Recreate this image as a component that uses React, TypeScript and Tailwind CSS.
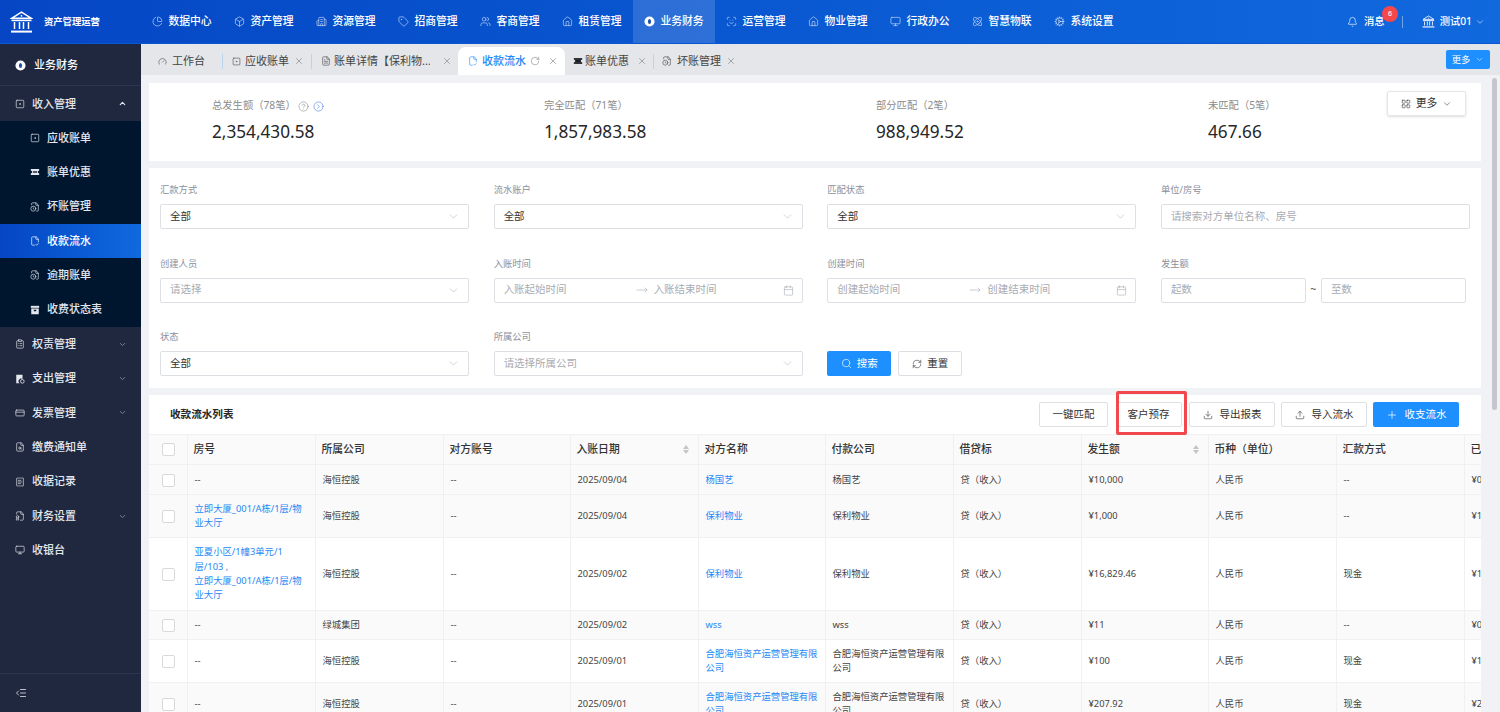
import React from "react";
import {
  Bell, Box, Building2, Calendar, ChartPie, ChevronDown, ChevronUp, CircleHelp, CircleChevronRight, ClipboardList,
  Cog, Download, FileCheck2, FileClock, FileSearch, Gauge, House, LayoutGrid, Monitor, MoveRight, Plus,
  ReceiptText, RefreshCw, RotateCw, Search, SquareDot, Tag, Upload, Atom, X, ScanFace, IndentDecrease, FileBadge,
  CreditCard, FileText, Users,
} from "lucide-react";

function CoinIcon({ className }: { className: string }) {
  return (
    <svg viewBox="0 0 12 12" className={className}>
      <circle cx="6" cy="6" r="5.5" fill="#fff" />
      <ellipse cx="6" cy="6" rx="1.7" ry="2.8" fill="#1b4fa8" />
    </svg>
  );
}

function BankIcon({ className }: { className: string }) {
  return (
    <svg viewBox="0 0 23 22" className={className} fill="none" stroke="currentColor">
      <path d="M2 7.2 11.5 1.2 21 7.2Z" strokeWidth="1.5" />
      <circle cx="11.5" cy="4.8" r="0.9" fill="currentColor" stroke="none" />
      <path d="M1.5 9.4H21.5" strokeWidth="1.6" />
      <path d="M4.5 11V18M9.5 11V18M13.5 11V18M18.5 11V18" strokeWidth="1.5" />
      <path d="M1 20.6H22" strokeWidth="2" />
    </svg>
  );
}

function TicketSolid({ className }: { className: string }) {
  return (
    <svg viewBox="0 0 12 12" className={className} fill="currentColor">
      <path d="M1 2.5H11V4.4A1.6 1.6 0 0 0 11 7.6V9.5H1V7.6A1.6 1.6 0 0 0 1 4.4Z" />
      <path d="M3.5 5.2H8.5V6.8H3.5Z" fill="#00162e" />
    </svg>
  );
}

function ArchiveSolid({ className }: { className: string }) {
  return (
    <svg viewBox="0 0 12 12" className={className} fill="currentColor">
      <path d="M1 1H11V3.4H1Z" />
      <path d="M1.5 4.2H10.5V11H1.5ZM4.5 5.8V7.4H7.5V5.8Z" fillRule="evenodd" />
    </svg>
  );
}

function DocSolid({ className }: { className: string }) {
  return (
    <svg viewBox="0 0 12 12" className={className} fill="currentColor">
      <path d="M1.5 1H9V6A3 3 0 0 0 5.6 11H1.5Z" />
      <circle cx="8.8" cy="8.8" r="2.2" fill="none" stroke="currentColor" strokeWidth="1" />
    </svg>
  );
}

const navItems = [
  { label: "数据中心", Icon: ChartPie },
  { label: "资产管理", Icon: Box },
  { label: "资源管理", Icon: Building2 },
  { label: "招商管理", Icon: Tag },
  { label: "客商管理", Icon: Users },
  { label: "租赁管理", Icon: House },
  { label: "业务财务", Icon: null, active: true },
  { label: "运营管理", Icon: ScanFace },
  { label: "物业管理", Icon: House },
  { label: "行政办公", Icon: Monitor },
  { label: "智慧物联", Icon: Atom },
  { label: "系统设置", Icon: Cog },
];

const sideTop = [
  { label: "权责管理", Icon: ClipboardList, arrow: true },
  { label: "支出管理", Icon: DocSolid, arrow: true },
  { label: "发票管理", Icon: CreditCard, arrow: true },
  { label: "缴费通知单", Icon: FileSearch },
  { label: "收据记录", Icon: ReceiptText },
  { label: "财务设置", Icon: FileBadge, arrow: true },
  { label: "收银台", Icon: Monitor },
];

const sideSub = [
  { label: "应收账单", Icon: SquareDot },
  { label: "账单优惠", Icon: TicketSolid },
  { label: "坏账管理", Icon: FileClock },
  { label: "收款流水", Icon: FileCheck2, active: true },
  { label: "逾期账单", Icon: FileClock },
  { label: "收费状态表", Icon: ArchiveSolid },
];

const stats = [
  { label: "总发生额（78笔）", value: "2,354,430.58", help: true },
  { label: "完全匹配（71笔）", value: "1,857,983.58" },
  { label: "部分匹配（2笔）", value: "988,949.52" },
  { label: "未匹配（5笔）", value: "467.66" },
];

const rows = [
  { h: "h-[30px] [&_td]:pt-[1px]", bg: "bg-[#fafafa]", room: ["--"], company: "海恒控股", date: "2025/09/04", name: "杨国艺", amount: "¥10,000", method: "--", done: "¥0" },
  { h: "h-[43px]", bg: "bg-[#fafafa]", room: ["立即大厦_001/A栋/1层/物业大厅"], company: "海恒控股", date: "2025/09/04", name: "保利物业", amount: "¥1,000", method: "--", done: "¥1,000" },
  { h: "h-[73px]", bg: "bg-white", room: ["亚夏小区/1幢3单元/1层/103 ,", "立即大厦_001/A栋/1层/物业大厅"], company: "海恒控股", date: "2025/09/02", name: "保利物业", amount: "¥16,829.46", method: "现金", done: "¥16,829" },
  { h: "h-[29px] [&_td]:pt-[1px]", bg: "bg-[#fafafa]", room: ["--"], company: "绿城集团", date: "2025/09/02", name: "wss", amount: "¥11", method: "--", done: "¥0" },
  { h: "h-[43px]", bg: "bg-white", room: ["--"], company: "海恒控股", date: "2025/09/01", name: "合肥海恒资产运营管理有限公司", amount: "¥100", method: "现金", done: "¥100" },
  { h: "h-[43px]", bg: "bg-[#fafafa]", room: ["--"], company: "海恒控股", date: "2025/09/01", name: "合肥海恒资产运营管理有限公司", amount: "¥207.92", method: "现金", done: "¥207.92" },
];

const headers = ["房号", "所属公司", "对方账号", "入账日期", "对方名称", "付款公司", "借贷标", "发生额", "币种（单位）", "汇款方式", "已匹配金额"];

function Sorter() {
  return (
    <span className="flex flex-col gap-[1px]">
      <span className="w-0 h-0 border-x-[3px] border-x-transparent border-b-[4px] border-b-[#c4c4c4]" />
      <span className="w-0 h-0 border-x-[3px] border-x-transparent border-t-[4px] border-t-[#c4c4c4]" />
    </span>
  );
}

function Field({ label, children }: { label: string; children: React.ReactNode }) {
  return (
    <div>
      <div className="h-[15px] leading-[15px] text-[9.3px] text-[#8a8f9c]">{label}</div>
      <div className="mt-[7px]">{children}</div>
    </div>
  );
}

function SelectBox({ value, placeholder }: { value?: string; placeholder?: string }) {
  return (
    <div className="h-[25px] border border-[#dcdfe4] rounded-[2px] flex items-center justify-between pl-[9px] pr-[8px] bg-white">
      <span className={value ? "text-[10.5px] text-[#333]" : "text-[10.5px] text-[#a8abb2]"}>{value || placeholder}</span>
      <ChevronDown className="w-[13px] h-[13px] text-[#b8bbc2]" strokeWidth={1.2} />
    </div>
  );
}

function RangeBox({ from, to }: { from: string; to: string }) {
  return (
    <div className="h-[25px] border border-[#dcdfe4] rounded-[2px] flex items-center pl-[9px] pr-[8px] bg-white text-[10.5px] text-[#a8abb2]">
      <span className="w-[132px]">{from}</span>
      <MoveRight className="w-[12px] h-[12px] text-[#a8abb2] mr-[6px]" strokeWidth={1.2} />
      <span className="flex-1">{to}</span>
      <Calendar className="w-[11px] h-[11px] text-[#a8abb2]" strokeWidth={1.3} />
    </div>
  );
}

function ToolButton({ className, children }: { className: string; children: React.ReactNode }) {
  return (
    <button className={`h-[25px] rounded-[2px] flex items-center justify-center text-[10.5px] ${className}`}>{children}</button>
  );
}

export default function App() {
  return (
    <div className="w-[1500px] h-[712px] overflow-hidden flex flex-col bg-[#f0f2f6] font-['Noto_Sans','Noto_Sans_CJK_SC',sans-serif] text-[#333]">
      {/* top bar */}
      <header className="h-[44px] shrink-0 flex items-stretch text-white bg-gradient-to-r from-[#0646c4] to-[#1169de] border-b border-[#0a57cf]">
        <div className="w-[141px] shrink-0 flex items-center pl-[10px]">
          <BankIcon className="w-[23px] h-[22px]" />
          <span className="ml-[11px] text-[9.3px] font-bold">资产管理运营</span>
        </div>
        {navItems.map(({ label, Icon, active }) => (
          <div key={label} className={active ? "w-[82px] flex items-center justify-center gap-[5px] bg-white/15" : "w-[82px] flex items-center justify-center gap-[5px]"}>
            {Icon ? <Icon className="w-[11px] h-[11px] text-[#dbe7fb]" strokeWidth={1.3} /> : <CoinIcon className="w-[11px] h-[11px]" />}
            <span className="text-[10.8px] font-medium">{label}</span>
          </div>
        ))}
        <div className="flex-1 flex items-center justify-end pr-[15px]">
          <Bell className="w-[11px] h-[12px]" strokeWidth={1.4} />
          <span className="relative ml-[6px] text-[10.3px] font-medium">
            消息
            <span className="absolute left-[18px] -top-[8px] w-[16px] h-[16px] rounded-full bg-[#f5484a] text-[7px] flex items-center justify-center">6</span>
          </span>
          <span className="ml-[17px] w-px h-[12px] bg-white/40" />
          <BankIcon className="ml-[19px] w-[13px] h-[13px]" />
          <span className="ml-[5px] text-[10.3px] font-medium">测试01</span>
          <ChevronDown className="ml-[3px] w-[10px] h-[10px]" strokeWidth={1.3} />
        </div>
      </header>

      <div className="flex-1 flex min-h-0">
        {/* sidebar */}
        <aside className="w-[141px] shrink-0 bg-[#20283f] text-[#e4e7ee] flex flex-col text-[11px] font-medium">
          <div className="h-[42px] shrink-0 flex items-center pl-[15px] pt-[2px] gap-[8px] border-b border-[#2c3450] text-white">
            <CoinIcon className="w-[11px] h-[11px]" />
            <span>业务财务</span>
          </div>
          <div className="h-[34.6px] shrink-0 flex items-center pl-[15px] pr-[14px] pt-[1px] gap-[7px]">
            <SquareDot className="w-[10px] h-[10px]" strokeWidth={1.6} />
            <span className="flex-1">收入管理</span>
            <ChevronUp className="w-[9px] h-[9px]" strokeWidth={3} />
          </div>
          <div className="bg-[#00162e] shrink-0">
            {sideSub.map(({ label, Icon, active }) => (
              <div key={label} className={active ? "h-[34.4px] flex items-center pl-[30px] gap-[7px] text-white bg-gradient-to-r from-[#0646c4] to-[#1169de]" : "h-[34.4px] flex items-center pl-[30px] gap-[7px]"}>
                <Icon className="w-[10px] h-[10px]" strokeWidth={1.6} />
                <span>{label}</span>
              </div>
            ))}
          </div>
          {sideTop.map(({ label, Icon, arrow }) => (
            <div key={label} className="h-[34.4px] shrink-0 flex items-center pl-[15px] pr-[14px] gap-[7px]">
              <Icon className="w-[10px] h-[10px]" strokeWidth={1.6} />
              <span className="flex-1">{label}</span>
              {arrow && <ChevronDown className="w-[9px] h-[9px] text-[#7d8496]" strokeWidth={2.5} />}
            </div>
          ))}
          <div className="mt-auto h-[39px] flex items-center pl-[15px] border-t border-[#2c3450]">
            <IndentDecrease className="w-[12px] h-[12px]" strokeWidth={1.6} />
          </div>
        </aside>

        <main className="relative flex-1 min-w-0 flex flex-col">
          {/* tabs */}
          <div className="h-[31px] shrink-0 bg-[#e4e6ea] flex items-end text-[11px] text-[#444] pl-[9px] whitespace-nowrap">
            <div className="w-[72px] h-[28px] shrink-0 flex items-center pl-[8px] gap-[5px]">
              <Gauge className="w-[9px] h-[9px]" strokeWidth={1.5} />
              <span>工作台</span>
            </div>
            <div className="w-[89px] h-[28px] shrink-0 flex items-center pl-[10px] gap-[4px]">
              <span className="w-px h-[15px] bg-[#bcd3ee] -ml-[10px] mr-[5px]" />
              <SquareDot className="w-[9px] h-[9px]" strokeWidth={1.5} />
              <span>应收账单</span>
              <X className="ml-[1px] w-[10px] h-[10px] text-[#777]" strokeWidth={1.4} />
            </div>
            <div className="w-[147px] h-[28px] shrink-0 flex items-center pl-[10px] gap-[3px]">
              <span className="w-px h-[15px] bg-[#bcd3ee] -ml-[10px] mr-[6px]" />
              <FileText className="w-[10px] h-[10px]" strokeWidth={1.4} />
              <span className="w-[96px] overflow-hidden">账单详情【保利物...</span>
              <X className="ml-[9px] w-[10px] h-[10px] text-[#777]" strokeWidth={1.4} />
            </div>
            <div className="w-[107px] h-[28px] shrink-0 flex items-center pl-[10px] gap-[4px] bg-white rounded-t-[8px] text-[#1e88f5] font-medium">
              <FileCheck2 className="w-[10px] h-[10px]" strokeWidth={1.4} />
              <span>收款流水</span>
              <RotateCw className="w-[10px] h-[10px] text-[#777]" strokeWidth={1.3} />
              <X className="ml-[4px] w-[10px] h-[10px] text-[#777]" strokeWidth={1.4} />
            </div>
            <div className="w-[88px] h-[28px] shrink-0 flex items-center pl-[8px] gap-[2px]">
              <TicketSolid className="w-[10px] h-[10px] text-[#333]" />
              <span>账单优惠</span>
              <X className="ml-[6px] w-[10px] h-[10px] text-[#777]" strokeWidth={1.4} />
            </div>
            <div className="w-[92px] h-[28px] shrink-0 flex items-center pl-[8px] gap-[5px]">
              <span className="w-px h-[15px] bg-[#bcd3ee] -ml-[8px] mr-[3px]" />
              <FileClock className="w-[10px] h-[10px]" strokeWidth={1.4} />
              <span>坏账管理</span>
              <X className="w-[10px] h-[10px] text-[#777]" strokeWidth={1.4} />
            </div>
            <div className="flex-1 h-full flex items-center justify-end pr-[10px]">
              <button className="w-[44px] h-[19px] rounded-[2px] bg-[#1e8fff] text-white text-[9.3px] flex items-center justify-center gap-[5px]">
                更多
                <ChevronDown className="w-[9px] h-[9px]" strokeWidth={1.4} />
              </button>
            </div>
          </div>

          <div className="flex-1 min-h-0 flex flex-col gap-[7px] pt-[8px] pl-[8px] pr-[19px]">
            {/* summary */}
            <section className="h-[78px] shrink-0 bg-white relative grid grid-cols-[332px_332px_332px_1fr] pl-[63px]">
              {stats.map((s) => (
                <div key={s.label} className="pt-[15px]">
                  <div className="h-[16px] flex items-center gap-[2px] text-[10.3px] text-[#8c8c8c]">
                    <span>{s.label}</span>
                    {s.help && <CircleHelp className="w-[11px] h-[11px] text-[#8c8c8c]" strokeWidth={1.3} />}
                    {s.help && <CircleChevronRight className="ml-[2px] w-[11px] h-[11px] text-[#4b7bec]" strokeWidth={1.3} />}
                  </div>
                  <div className="mt-[6px] text-[17.2px] leading-[24px] text-[#262626]">{s.value}</div>
                </div>
              ))}
              <button className="absolute right-[15px] top-[8px] w-[79px] h-[25px] border border-[#e4e6ea] rounded-[2px] flex items-center justify-center gap-[5px] text-[10.8px] shadow-sm">
                <LayoutGrid className="w-[10px] h-[10px]" strokeWidth={1.4} />
                更多
                <ChevronDown className="w-[10px] h-[10px]" strokeWidth={1.3} />
              </button>
            </section>

            {/* filters */}
            <section className="h-[220px] shrink-0 bg-white px-[11px] pt-[14px] grid grid-cols-4 gap-x-[24.5px] gap-y-[26.5px] content-start">
              <Field label="汇款方式"><SelectBox value="全部" /></Field>
              <Field label="流水账户"><SelectBox value="全部" /></Field>
              <Field label="匹配状态"><SelectBox value="全部" /></Field>
              <Field label="单位/房号">
                <div className="h-[25px] border border-[#dcdfe4] rounded-[2px] flex items-center pl-[9px] text-[10.5px] text-[#a8abb2]">请搜索对方单位名称、房号</div>
              </Field>
              <Field label="创建人员"><SelectBox placeholder="请选择" /></Field>
              <Field label="入账时间"><RangeBox from="入账起始时间" to="入账结束时间" /></Field>
              <Field label="创建时间"><RangeBox from="创建起始时间" to="创建结束时间" /></Field>
              <Field label="发生额">
                <div className="flex items-center text-[10.5px] text-[#a8abb2]">
                  <div className="w-[145px] h-[25px] border border-[#dcdfe4] rounded-[2px] flex items-center pl-[9px]">起数</div>
                  <span className="w-[15px] text-center text-[#555]">~</span>
                  <div className="w-[145px] h-[25px] border border-[#dcdfe4] rounded-[2px] flex items-center pl-[9px]">至数</div>
                </div>
              </Field>
              <Field label="状态"><SelectBox value="全部" /></Field>
              <Field label="所属公司"><SelectBox placeholder="请选择所属公司" /></Field>
              <div className="pt-[22px] flex gap-[7px]">
                <ToolButton className="w-[64px] bg-[#1e8fff] text-white gap-[5px]">
                  <Search className="w-[11px] h-[11px]" strokeWidth={1.4} />
                  搜索
                </ToolButton>
                <ToolButton className="w-[64px] border border-[#dcdfe4] gap-[5px]">
                  <RefreshCw className="w-[10px] h-[10px]" strokeWidth={1.4} />
                  重置
                </ToolButton>
              </div>
            </section>

            {/* list */}
            <section className="flex-1 min-h-0 bg-white relative overflow-hidden">
              <div className="h-[39px] flex items-center pl-[21px] pr-[22px]">
                <span className="flex-1 text-[10.6px] font-bold text-[#262626]">收款流水列表</span>
                <ToolButton className="w-[69px] border border-[#dcdfe4]">一键匹配</ToolButton>
                <ToolButton className="ml-[9px] w-[65px] pr-[2px] border border-[#dcdfe4]">客户预存</ToolButton>
                <ToolButton className="ml-[7px] w-[86px] border border-[#dcdfe4] gap-[7px]">
                  <Download className="w-[10px] h-[10px]" strokeWidth={1.4} />
                  导出报表
                </ToolButton>
                <ToolButton className="ml-[6px] w-[86px] border border-[#dcdfe4] gap-[7px]">
                  <Upload className="w-[10px] h-[10px]" strokeWidth={1.4} />
                  导入流水
                </ToolButton>
                <ToolButton className="ml-[6px] w-[86px] bg-[#1e8fff] text-white gap-[7px]">
                  <Plus className="w-[12px] h-[12px]" strokeWidth={1.4} />
                  收支流水
                </ToolButton>
              </div>
              <div className="overflow-hidden">
                <table className="table-fixed w-[1443px] border-collapse text-[9.33px] leading-[14.4px] text-[#444]">
                  <colgroup>
                    <col className="w-[38px]" />
                    <col className="w-[128px]" />
                    <col className="w-[128px]" />
                    <col className="w-[127px]" />
                    <col className="w-[128px]" />
                    <col className="w-[127px]" />
                    <col className="w-[128px]" />
                    <col className="w-[128px]" />
                    <col className="w-[127px]" />
                    <col className="w-[128px]" />
                    <col className="w-[128px]" />
                    <col className="w-[128px]" />
                  </colgroup>
                  <thead>
                    <tr className="h-[30px] bg-[#fafafa] text-[10.8px] text-[#333] border-y border-[#f0f0f0]">
                      <th className="border-r border-[#f0f0f0] font-medium">
                        <span className="block ml-[13px] w-[13px] h-[13px] bg-white border border-[#d9d9d9] rounded-[2px]" />
                      </th>
                      {headers.map((h) => (
                        <th key={h} className="border-r border-[#f0f0f0] pl-[6px] pr-[9px] text-left font-medium whitespace-nowrap">
                          <span className="flex items-center justify-between">
                            {h}
                            {(h === "入账日期" || h === "发生额") && <Sorter />}
                          </span>
                        </th>
                      ))}
                    </tr>
                  </thead>
                  <tbody>
                    {rows.map((r, i) => (
                      <tr key={i} className={`${r.h} ${r.bg} border-b border-[#f0f0f0]`}>
                        <td className="border-r border-[#f0f0f0]">
                          <span className="block ml-[13px] w-[13px] h-[13px] bg-white border border-[#d9d9d9] rounded-[2px]" />
                        </td>
                        <td className={r.room[0] === "--" ? "border-r border-[#f0f0f0] px-[7px]" : "border-r border-[#f0f0f0] px-[7px] text-[#1e88f5]"}>
                          {r.room.map((x) => <div key={x}>{x}</div>)}
                        </td>
                        <td className="border-r border-[#f0f0f0] px-[7px]">{r.company}</td>
                        <td className="border-r border-[#f0f0f0] px-[7px]">--</td>
                        <td className="border-r border-[#f0f0f0] px-[7px]">{r.date}</td>
                        <td className="border-r border-[#f0f0f0] px-[7px] text-[#1e88f5]">{r.name}</td>
                        <td className="border-r border-[#f0f0f0] px-[7px]">{r.name}</td>
                        <td className="border-r border-[#f0f0f0] px-[7px] whitespace-nowrap">贷（收入）</td>
                        <td className="border-r border-[#f0f0f0] px-[7px]">{r.amount}</td>
                        <td className="border-r border-[#f0f0f0] px-[7px]">人民币</td>
                        <td className="border-r border-[#f0f0f0] px-[7px]">{r.method}</td>
                        <td className="px-[7px]">{r.done}</td>
                      </tr>
                    ))}
                  </tbody>
                </table>
              </div>
            </section>
          </div>

          {/* red marker around the button */}
          <div className="absolute left-[975px] top-[347px] w-[71px] h-[44px] border-[3px] border-[#f0484c] rounded-[2px] pointer-events-none" />
          {/* page scrollbar */}
          <div className="absolute right-[3.5px] top-[34px] w-[5px] h-[332px] rounded-full bg-[#c4c6cb]" />
        </main>
      </div>
    </div>
  );
}
